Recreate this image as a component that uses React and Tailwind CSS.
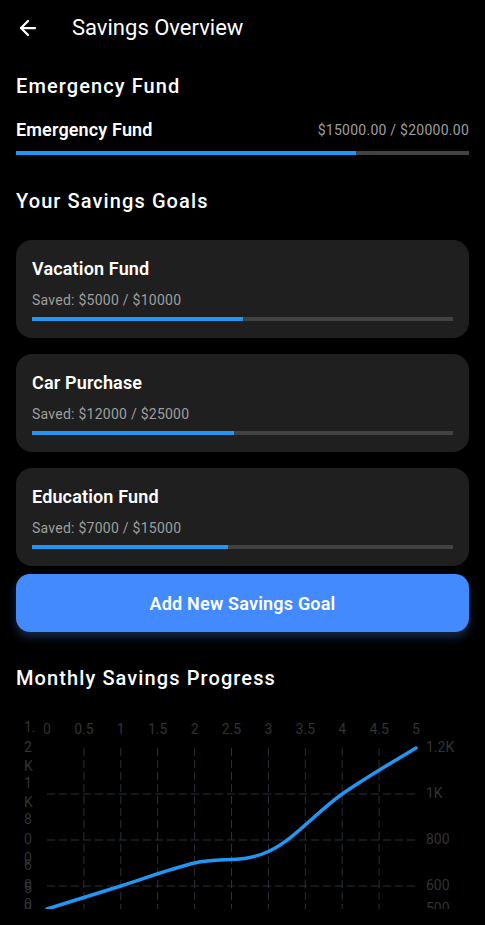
import React from 'react';
import { ArrowLeft } from 'lucide-react';

const goals = [
  { name: 'Vacation Fund', saved: 5000, target: 10000 },
  { name: 'Car Purchase', saved: 12000, target: 25000 },
  { name: 'Education Fund', saved: 7000, target: 15000 },
];

const monthly = [500, 600, 700, 750, 1000, 1200];

// chart geometry (svg coords)
const X0 = 31;
const XS = 73.8;
const px = (i) => X0 + XS * i;
const py = (v) => 48 + (1200 - v) * 0.23;

function curvePath(pts, smoothness = 0.35) {
  let d = `M${pts[0][0]},${pts[0][1]}`;
  let temp = [0, 0];
  for (let i = 1; i < pts.length; i++) {
    const prev = pts[i - 1];
    const cur = pts[i];
    const next = pts[i + 1] || cur;
    const c1 = [prev[0] + temp[0], prev[1] + temp[1]];
    temp = [((next[0] - prev[0]) / 2) * smoothness, ((next[1] - prev[1]) / 2) * smoothness];
    const c2 = [cur[0] - temp[0], cur[1] - temp[1]];
    d += ` C${c1[0]},${c1[1]} ${c2[0]},${c2[1]} ${cur[0]},${cur[1]}`;
  }
  return d;
}

function ProgressBar({ value, className = '' }) {
  return (
    <div className={`h-1 w-full bg-[#424242] ${className}`}>
      <div className="h-full bg-[#2196f3]" style={{ width: `${value * 100}%` }} />
    </div>
  );
}

function Chart() {
  const pts = monthly.map((v, i) => [px(i), py(v)]);
  const leftLabels = [
    { lines: ['1.', '2', 'K'], y: 48 },
    { lines: ['1', 'K'], y: 94 },
    { lines: ['8', '0', '0'], y: 140 },
    { lines: ['6', '0', '0'], y: 186 },
    { lines: ['5', '0', '0'], y: 209 },
  ];
  const rightLabels = [
    ['1.2K', 48],
    ['1K', 94],
    ['800', 140],
    ['600', 186],
    ['500', 209],
  ];
  return (
    <div className="mt-2 h-[209px] overflow-hidden">
      <svg width="453" height="209" className="block" style={{ fontFamily: 'Roboto, sans-serif' }}>
        {[0.5, 1, 1.5, 2, 2.5, 3, 3.5, 4, 4.5].map((i) => (
          <line key={i} x1={px(i)} x2={px(i)} y1={48} y2={209} stroke="#263238" strokeWidth="1" strokeDasharray="8 4" />
        ))}
        {[1000, 800, 600].map((v) => (
          <line key={v} x1={X0} x2={px(5)} y1={py(v)} y2={py(v)} stroke="#263238" strokeWidth="1" strokeDasharray="8 4" />
        ))}
        {[0, 0.5, 1, 1.5, 2, 2.5, 3, 3.5, 4, 4.5, 5].map((i) => (
          <text key={i} x={px(i)} y={30} fill="#333" fontSize="14" textAnchor="middle" dominantBaseline="middle">
            {i}
          </text>
        ))}
        {leftLabels.map((l) =>
          l.lines.map((c, k) => (
            <text
              key={`${l.y}-${k}`}
              x={8}
              y={l.y + (k - (l.lines.length - 1) / 2) * 19.5}
              fill="#333"
              fontSize="14"
              dominantBaseline="middle"
            >
              {c}
            </text>
          ))
        )}
        {rightLabels.map(([t, y]) => (
          <text key={t} x={410} y={y} fill="#333" fontSize="14" dominantBaseline="middle">
            {t}
          </text>
        ))}
        <path d={curvePath(pts)} fill="none" stroke="#2196f3" strokeWidth="3.5" strokeLinecap="round" />
      </svg>
    </div>
  );
}

export default function App() {
  return (
    <div className="min-h-[925px] bg-black text-white" style={{ fontFamily: 'Roboto, "Noto Sans", sans-serif' }}>
      <div className="flex h-14 items-center gap-8 px-4">
        <ArrowLeft size={24} strokeWidth={2.25} />
        <h1 className="text-[22px] leading-7 font-normal">Savings Overview</h1>
      </div>

      <div className="px-4">
        <h2 className="mt-4 text-[20px] leading-7 font-medium tracking-[1.1px]">Emergency Fund</h2>
        <div className="mt-[18px] flex items-center justify-between">
          <span className="text-[18px] leading-6 font-semibold tracking-[0.15px]">Emergency Fund</span>
          <span className="text-[14px] leading-6 tracking-[0.25px] text-[#9e9e9e]">$15000.00 / $20000.00</span>
        </div>
        <ProgressBar value={0.75} className="mt-[9px]" />

        <h2 className="mt-8 text-[20px] leading-7 font-medium tracking-[1.1px]">Your Savings Goals</h2>
        <div className="mt-[25px] flex flex-col gap-4">
          {goals.map((g) => (
            <div key={g.name} className="rounded-2xl bg-[#1f1f1f] px-4 pt-4 pb-[17px]">
              <div className="text-[18px] leading-[26px] font-semibold tracking-[0.15px]">{g.name}</div>
              <div className="mt-2 text-[14px] leading-5 tracking-[0.25px] text-[#9e9e9e]">
                Saved: ${g.saved} / ${g.target}
              </div>
              <ProgressBar value={g.saved / g.target} className="mt-[7px]" />
            </div>
          ))}
        </div>

        <button className="mt-2 flex h-[58px] w-full items-center justify-center rounded-[14px] bg-[#448aff] text-[18px] font-semibold tracking-[0.2px] text-white shadow-[0_5px_10px_rgba(68,138,255,0.3)]">
          Add New Savings Goal
        </button>

        <h2 className="mt-8 text-[20px] leading-7 font-medium tracking-[1.1px]">Monthly Savings Progress</h2>
        <Chart />
      </div>
    </div>
  );
}
